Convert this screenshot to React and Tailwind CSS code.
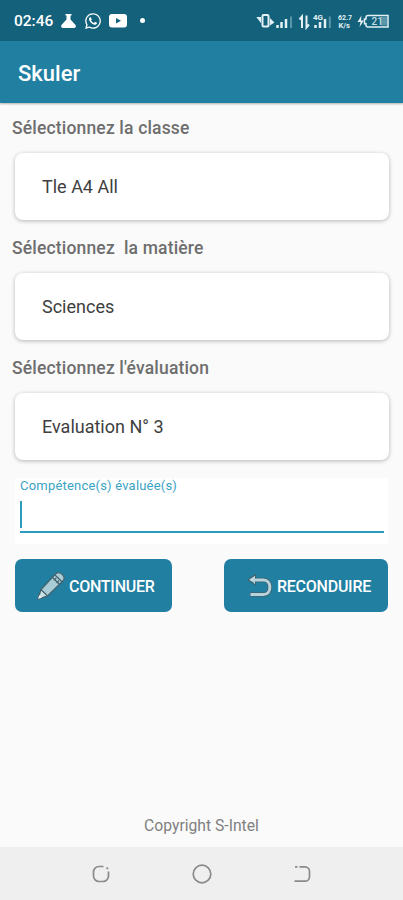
import { FaWhatsapp } from "react-icons/fa";

const FIELDS = [
  { label: "Sélectionnez la classe", value: "Tle A4 All" },
  { label: "Sélectionnez  la matière", value: "Sciences" },
  { label: "Sélectionnez l'évaluation", value: "Evaluation N° 3" },
];

function StatusBar() {
  return (
    <div className="h-[41px] shrink-0 bg-[#13617b] flex items-center pl-[14px] pr-[13px] text-white">
      <span className="w-[40px] pt-[2px] text-[15.5px] font-medium leading-none whitespace-nowrap">02:46</span>
      <svg className="ml-[7px] w-[15px] h-[16px]" viewBox="0 0 15 16" fill="currentColor">
        <path d="M4.5 1h6v1.6h-1v4l4.8 5.2c1.2 1.5.4 3.2-1.4 3.2H2.1c-1.8 0-2.6-1.7-1.4-3.2l4.8-5.2v-4h-1z" />
      </svg>
      <FaWhatsapp className="ml-[8px] w-[18px] h-[18px]" />
      <svg className="ml-[7px] w-[18px] h-[14px]" viewBox="0 0 18 14">
        <rect width="18" height="13.5" rx="3" fill="currentColor" />
        <path d="M7 4l5 2.8L7 9.6z" fill="#13617b" />
      </svg>
      <span className="ml-[13px] w-[5px] h-[5px] rounded-full bg-white" />

      <svg className="ml-auto w-[134px] h-[20px]" viewBox="0 0 134 20" fill="none" stroke="#e3f1f5">
        {/* vibrate */}
        <rect x="6.5" y="4" width="6" height="11.5" rx="1" strokeWidth="2" />
        <path d="M1.5 6.5h3v4zM14.5 8.500v5l3-2z" fill="#e3f1f5" strokeWidth="1.200" />
        {/* sim 1 */}
        <path d="M21.5 14v3M25.5 11v6M30 8v9" strokeWidth="2.5" />
        <path d="M35 5.500v11.500" stroke="#5996a9" strokeWidth="2" />
        {/* data arrows */}
        <path d="M46 17V5.5l-2.500 3M50.500 4.500v12l2.500-3" strokeWidth="2" />
        {/* sim 2 */}
        <text x="57" y="8.500" fontSize="8" fontWeight="700" fill="#e3f1f5" stroke="none">4G</text>
        <path d="M59.500 14v3M64 11v6M69 8v9" strokeWidth="2.500" />
        <path d="M73.800 5.500v11.500" stroke="#5996a9" strokeWidth="2" />
        {/* network speed */}
        <text x="82" y="8.500" fontSize="7" fontWeight="700" fill="#e3f1f5" stroke="none">62.7</text>
        <text x="82.500" y="17" fontSize="7.500" fontWeight="700" fill="#e3f1f5" stroke="none">K/s</text>
        {/* battery */}
        <path d="M105.500 4.500l-4 6.500h3l-1 5 4.500-6.500H105z" fill="#e3f1f5" stroke="none" />
        <path d="M112 4.500h20v11.500h-20a2 2 0 0 1-2-2v-1.200h-1.500V8h1.500V6.500a2 2 0 0 1 2-2z" strokeWidth="1.500" />
        <rect x="125" y="6" width="6" height="8.500" fill="#5996a9" stroke="none" />
        <text x="115.500" y="13.800" fontSize="10" fontWeight="500" fill="#c4dde5" stroke="none">21</text>
      </svg>
    </div>
  );
}

function SelectField({ label, value }) {
  return (
    <div className="h-[120px]">
      <div className="h-[40px] pl-[12px] pb-[10px] flex items-center whitespace-pre text-[17.5px] font-medium tracking-[0.17px] text-[#6e6e6e]">
        {label}
      </div>
      <button
        type="button"
        className="block w-[374px] h-[67px] ml-[15px] pl-[27px] rounded-[8px] bg-white text-left text-[18px] text-[#3e3e3e] shadow-[0_1px_4px_rgba(0,0,0,0.28)]"
      >
        {value}
      </button>
    </div>
  );
}

function PencilIcon() {
  return (
    <svg className="w-[30px] h-[30px]" viewBox="0 0 30 30" stroke="#42616d" strokeWidth="1.200" strokeLinejoin="round">
      <path d="M2 28l3-9.500L19 3.500c2-2.500 4.500-2.500 7-.3 2.500 2.500 3 4.800.6 7L11.500 25z" fill="#a9ccd7" />
      <path d="M5 18.500l6.500 6.500L2 28z" fill="#c9e0e6" />
      <path d="M2 28l1.300-4 2.700 2.600z" fill="#e7f2f5" stroke="none" />
      <path d="M16.500 6.500l7 6.800M19 4l7 6.800M17.800 9.300l2.500-2.500M20.500 12l2.500-2.500" fill="none" />
    </svg>
  );
}

function UndoIcon() {
  return (
    <svg className="w-[26px] h-[24px]" viewBox="0 0 26 24" fill="none" strokeLinejoin="round">
      <path d="M6 6h10.500c8.500 0 8.500 14.500 0 14.500H3" stroke="#42616d" strokeWidth="4.600" />
      <path d="M1 5.700L8.500.8v9.800z" fill="#c0dce4" stroke="#42616d" strokeWidth="1.200" />
      <path d="M6 6h10.500c8.500 0 8.500 14.500 0 14.500H3.500" stroke="#b5d3dc" strokeWidth="3" />
    </svg>
  );
}

function NavigationBar() {
  return (
    <div className="h-[53px] shrink-0 bg-[#efefef] flex items-center justify-between pl-[91px] pr-[91px] text-[#8a8a8a]">
      <svg className="w-[20px] h-[20px]" viewBox="0 0 20 20" fill="none" stroke="currentColor" strokeWidth="1.700">
        <path d="M12.500 2.500H8a5.500 5.500 0 0 0-5.500 5.500v4A5.500 5.500 0 0 0 8 17.500h4a5.500 5.500 0 0 0 5.500-5.500V7.500" />
        <path d="M15.500 3.500l1.500 1.500" />
      </svg>
      <svg className="w-[20px] h-[20px]" viewBox="0 0 20 20" fill="none" stroke="currentColor" strokeWidth="1.700">
        <circle cx="10" cy="10" r="8.800" />
      </svg>
      <svg className="w-[20px] h-[20px]" viewBox="0 0 20 20" fill="none" stroke="currentColor" strokeWidth="1.700">
        <path d="M7.500 2.800H13a4.500 4.500 0 0 1 4.500 4.500v5.400a4.500 4.500 0 0 1-4.500 4.500H2.500M3 2.800h2.500" />
      </svg>
    </div>
  );
}

export default function App() {
  return (
    <div className="w-[403px] h-[900px] flex flex-col overflow-hidden bg-[#fafafa] font-[Roboto,sans-serif]">
      <StatusBar />
      <header className="h-[62px] shrink-0 bg-[#2180a2] flex items-center pl-[18px] pt-[3px] shadow-[0_1px_2px_rgba(0,0,0,0.3)]">
        <h1 className="text-[22px] font-medium text-white">Skuler</h1>
      </header>

      <main className="flex-1 flex flex-col pt-[10px]">
        {FIELDS.map((field) => (
          <SelectField key={field.label} {...field} />
        ))}

        <div className="mt-[5px] ml-[15px] w-[373px] h-[66px] bg-white px-[5px]">
          <label className="block h-[22px] text-[13px] leading-[16px] tracking-[0.200px] text-[#3ba3c4]">
            Compétence(s) évaluée(s)
          </label>
          <div className="h-[33px] pt-px w-[364px] border-b-2 border-[#2c9bbd]">
            <div className="w-[2px] h-[27px] bg-[#2c9bbd]" />
          </div>
        </div>

        <div className="mt-[15px] ml-[15px] mr-[15px] flex justify-between text-[16px] font-medium tracking-[-0.25px] text-white">
          <button type="button" className="w-[157px] h-[53px] rounded-[7px] bg-[#2180a2] flex items-center pl-[21px]">
            <PencilIcon />
            <span className="ml-[3px] pt-[2px]">CONTINUER</span>
          </button>
          <button type="button" className="w-[164px] h-[53px] rounded-[7px] bg-[#2180a2] flex items-center pl-[23px]">
            <UndoIcon />
            <span className="ml-[4px] pt-[2px]">RECONDUIRE</span>
          </button>
        </div>

        <p className="mt-auto mb-[10px] text-center text-[15.7px] leading-[22px] text-[#808080]">Copyright S-Intel</p>
      </main>
      <NavigationBar />
    </div>
  );
}
